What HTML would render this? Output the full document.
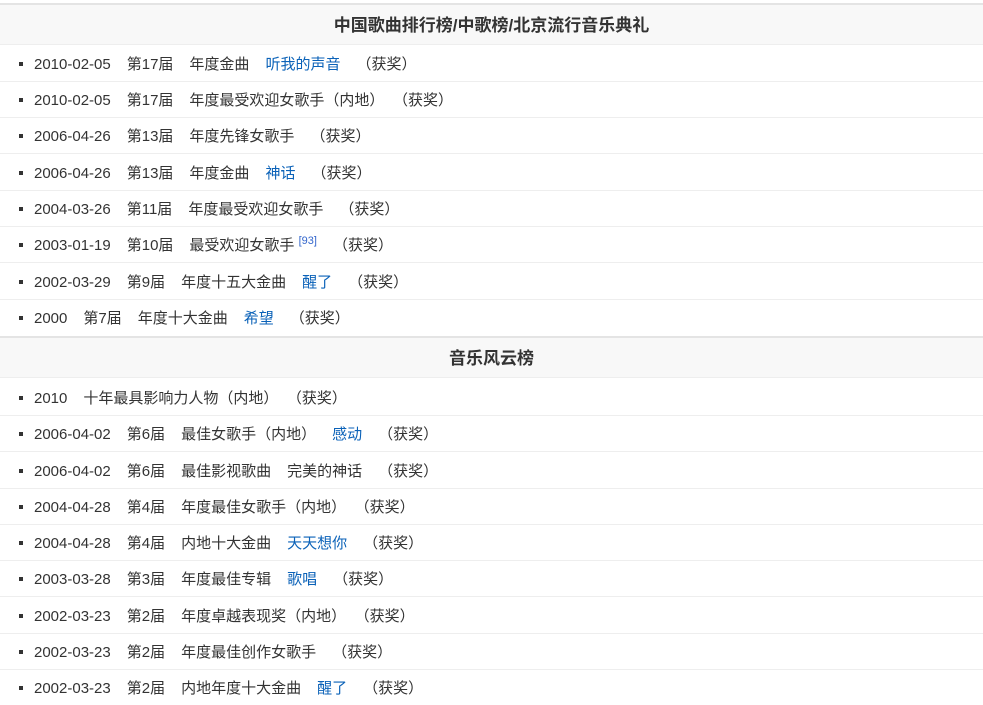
<!DOCTYPE html>
<html><head><meta charset="utf-8"><style>
body{margin:0;width:983px;height:705px;background:#fff;position:relative;overflow:hidden;font-family:"Liberation Sans","Noto Sans CJK SC",sans-serif;font-size:15px;color:#333}
.h{position:absolute;left:0;width:983px;height:39px;background:#f8f8f8;border-top:2px solid #e4e4e4;border-bottom:1px solid #eee;text-align:center;line-height:41px;font-weight:bold;font-size:17px;color:#333;font-family:"Liberation Sans","Noto Sans CJK SC",sans-serif}
.r{position:absolute;left:0;width:983px;height:36px;line-height:36px;border-bottom:1px solid #eee;white-space:nowrap}
.r:before{content:"";position:absolute;left:19px;top:17px;width:4px;height:4px;background:#333}
.r span{margin-right:16px;position:relative;top:2px}
.r span:first-child{margin-left:34px}
a{color:#0b62b8;text-decoration:none}
sup{font-size:11px;color:#3366cc;vertical-align:6px;line-height:0}
</style></head><body>
<div class="h" style="top:3px">中国歌曲排行榜/中歌榜/北京流行音乐典礼</div>
<div class="r" style="top:45px"><span>2010-02-05</span><span>第17届</span><span>年度金曲</span><span><a>听我的声音</a></span><span>（获奖）</span></div>
<div class="r" style="top:81px"><span>2010-02-05</span><span>第17届</span><span>年度最受欢迎女歌手（内地）</span><span>（获奖）</span></div>
<div class="r" style="top:117px"><span>2006-04-26</span><span>第13届</span><span>年度先锋女歌手</span><span>（获奖）</span></div>
<div class="r" style="top:154px"><span>2006-04-26</span><span>第13届</span><span>年度金曲</span><span><a>神话</a></span><span>（获奖）</span></div>
<div class="r" style="top:190px"><span>2004-03-26</span><span>第11届</span><span>年度最受欢迎女歌手</span><span>（获奖）</span></div>
<div class="r" style="top:226px"><span>2003-01-19</span><span>第10届</span><span>最受欢迎女歌手 <sup>[93]</sup></span><span>（获奖）</span></div>
<div class="r" style="top:263px"><span>2002-03-29</span><span>第9届</span><span>年度十五大金曲</span><span><a>醒了</a></span><span>（获奖）</span></div>
<div class="r" style="top:299px;border-bottom:none"><span>2000</span><span>第7届</span><span>年度十大金曲</span><span><a>希望</a></span><span>（获奖）</span></div>
<div class="h" style="top:336px">音乐风云榜</div>
<div class="r" style="top:379px"><span>2010</span><span>十年最具影响力人物（内地）</span><span>（获奖）</span></div>
<div class="r" style="top:415px"><span>2006-04-02</span><span>第6届</span><span>最佳女歌手（内地）</span><span><a>感动</a></span><span>（获奖）</span></div>
<div class="r" style="top:452px"><span>2006-04-02</span><span>第6届</span><span>最佳影视歌曲</span><span>完美的神话</span><span>（获奖）</span></div>
<div class="r" style="top:488px"><span>2004-04-28</span><span>第4届</span><span>年度最佳女歌手（内地）</span><span>（获奖）</span></div>
<div class="r" style="top:524px"><span>2004-04-28</span><span>第4届</span><span>内地十大金曲</span><span><a>天天想你</a></span><span>（获奖）</span></div>
<div class="r" style="top:560px"><span>2003-03-28</span><span>第3届</span><span>年度最佳专辑</span><span><a>歌唱</a></span><span>（获奖）</span></div>
<div class="r" style="top:597px"><span>2002-03-23</span><span>第2届</span><span>年度卓越表现奖（内地）</span><span>（获奖）</span></div>
<div class="r" style="top:633px"><span>2002-03-23</span><span>第2届</span><span>年度最佳创作女歌手</span><span>（获奖）</span></div>
<div class="r" style="top:669px;border-bottom:none"><span>2002-03-23</span><span>第2届</span><span>内地年度十大金曲</span><span><a>醒了</a></span><span>（获奖）</span></div>
</body></html>
